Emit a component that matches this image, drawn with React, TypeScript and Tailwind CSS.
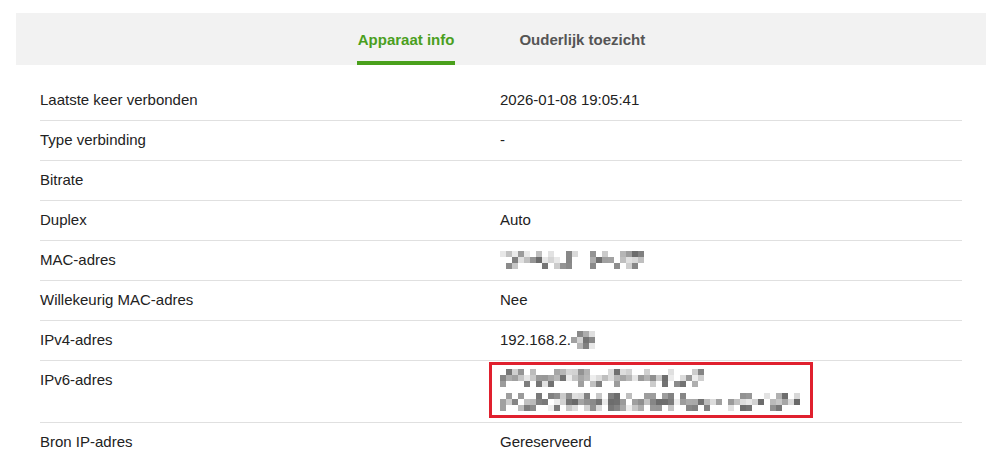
import React from "react";

// ── Pixelated censor block ────────────────────────────────────────────────────
// Deterministic mosaic so the picture stays the same between renders.
function PixelBlur({
  width,
  rows = 3,
  cell = 6,
  seed = 1,
}: {
  width: number;
  rows?: number;
  cell?: number;
  seed?: number;
}) {
  let s = seed * 9301 + 49297;
  const rand = () => {
    s = (s * 9301 + 49297) % 233280;
    return s / 233280;
  };
  const cols = Math.floor(width / cell);
  const rects: React.ReactNode[] = [];
  for (let r = 0; r < rows; r++) {
    for (let c = 0; c < cols; c++) {
      const density = r === 1 ? 0.9 : 0.5;
      if (rand() > density) continue;
      const v = Math.floor(105 + rand() * 135);
      rects.push(
        <rect
          key={`${r}-${c}`}
          x={c * cell}
          y={r * cell}
          width={cell}
          height={cell}
          fill={`rgb(${v},${v},${v})`}
        />
      );
    }
  }
  return (
    <svg
      width={cols * cell}
      height={rows * cell}
      className="inline-block align-middle"
      shapeRendering="crispEdges"
    >
      {rects}
    </svg>
  );
}

type Row = { label: string; value: React.ReactNode };

const ROWS: Row[] = [
  { label: "Laatste keer verbonden", value: "2026-01-08 19:05:41" },
  { label: "Type verbinding", value: "-" },
  { label: "Bitrate", value: "" },
  { label: "Duplex", value: "Auto" },
  { label: "MAC-adres", value: <PixelBlur width={144} seed={3} /> },
  { label: "Willekeurig MAC-adres", value: "Nee" },
  {
    label: "IPv4-adres",
    value: (
      <span className="inline-flex items-center">
        192.168.2.
        <PixelBlur width={24} seed={7} />
      </span>
    ),
  },
];

function InfoRow({ label, value }: Row) {
  return (
    <div className="grid grid-cols-[460px_1fr] border-b border-[#e0e0e0] pt-[10px] pb-[11px] leading-[18px]">
      <span>{label}</span>
      <span className="flex items-center h-[18px]">{value}</span>
    </div>
  );
}

export default function App() {
  return (
    <div
      className="min-h-[473px] bg-white pt-[13px] text-[15px] text-[#222]"
      style={{ fontFamily: '"Liberation Sans", Arial, sans-serif' }}
    >
      <div className="ml-[16px] w-[970px]">
        {/* Tabs */}
        <div className="flex h-[52px] justify-center gap-[64px] bg-[#f2f2f2] font-bold">
          <div className="relative flex items-center px-[1px] pt-[2px] text-[#4a9f1e]">
            Apparaat info
            <span className="absolute bottom-0 left-0 right-0 h-[4px] bg-[#4aa01c]" />
          </div>
          <div className="flex items-center pt-[2px] text-[#555]">
            Ouderlijk toezicht
          </div>
        </div>

        {/* Device info table */}
        <div className="mt-[16px] px-6">
          {ROWS.map((r) => (
            <InfoRow key={r.label} {...r} />
          ))}

          {/* IPv6 row: two-line value, highlighted */}
          <div className="grid grid-cols-[460px_1fr] border-b border-[#e0e0e0] pb-[4px] leading-[18px]">
            <span className="pt-[10px]">IPv6-adres</span>
            <div className="-ml-[11px] mt-[1px] w-[324px] border-[3px] border-[#e0202e] pl-2 py-[1px]">
              <div className="flex h-[24px] items-center">
                <PixelBlur width={204} seed={11} />
              </div>
              <div className="flex h-[24px] items-center">
                <PixelBlur width={300} seed={17} />
              </div>
            </div>
          </div>

          <div className="grid grid-cols-[460px_1fr] pt-[10px] pb-[11px] leading-[18px]">
            <span>Bron IP-adres</span>
            <span>Gereserveerd</span>
          </div>
        </div>
      </div>
    </div>
  );
}
